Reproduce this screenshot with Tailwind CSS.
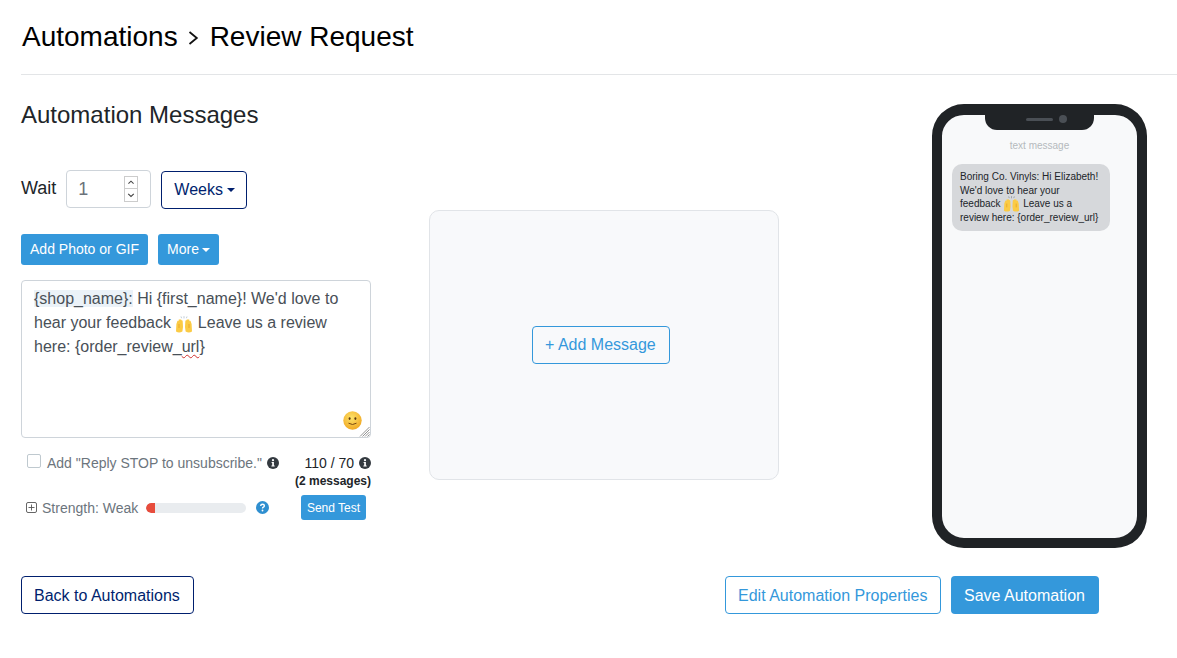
<!DOCTYPE html>
<html>
<head>
<meta charset="utf-8">
<script src="https://cdn.jsdelivr.net/npm/@tailwindcss/browser@4"></script>
</head>
<body class="bg-white font-['Liberation_Sans',Arial,sans-serif] text-[#212529] overflow-hidden">
<div class="w-[1177px] h-[658px] pl-[21px] flex flex-col">
  <header class="h-[75px] border-b border-[#e3e5e7] flex items-start pt-[20px]">
    <h1 class="flex items-center text-[28px] leading-[34px] text-black pl-px">
      <span>Automations</span>
      <svg class="w-[11px] h-[16px] ml-[10px] mr-[11px] mt-[2px]" viewBox="0 0 11 16" fill="none" stroke="#111" stroke-width="1.8"><path d="M1.5 2 L8.8 8 L1.5 14"/></svg>
      <span>Review Request</span>
    </h1>
  </header>
  <main class="flex h-[485px]">
    <section class="w-[350px] shrink-0">
      <h2 class="text-[24px] leading-[29px] mt-[25px] text-[#212529]">Automation Messages</h2>
      <div class="flex items-start mt-[41px] h-[38px]">
        <span class="text-[18px] leading-[36px] mr-[10px]">Wait</span>
        <div class="w-[85px] h-[38px] rounded border border-[#ced4da] flex items-center justify-between pl-[11px] pr-[12px] text-[18px] text-[#6b727a]">
          <span>1</span>
          <div class="w-[14px] h-[26px] border border-[#ccc] flex flex-col text-[#444]">
            <svg class="h-[12px] w-full border-b border-[#ccc]" viewBox="0 0 12 12" fill="none" stroke="#444" stroke-width="1.1"><path d="M3.2 7.2 L6 4.5 L8.8 7.2"/></svg>
            <svg class="h-[12px] w-full" viewBox="0 0 12 12" fill="none" stroke="#444" stroke-width="1.1"><path d="M3.2 4.8 L6 7.5 L8.8 4.8"/></svg>
          </div>
        </div>
        <button class="ml-[10px] mt-px pl-[12px] w-[86px] h-[38px] rounded border border-[#001f6e] text-[#001f6e] text-[16px] flex items-center justify-start">Weeks<span class="ml-[4px] w-0 h-0 border-x-[4px] border-x-transparent border-t-[4.5px] border-t-[#001f6e]"></span></button>
      </div>
      <div class="flex mt-[26px] gap-[10px]">
        <button class="w-[127px] h-[31px] rounded-[3px] bg-[#3498db] text-white text-[14px]">Add Photo or GIF</button>
        <button class="w-[61px] h-[31px] rounded-[3px] bg-[#3498db] text-white text-[14px] flex items-center justify-center">More<span class="ml-[3px] w-0 h-0 border-x-[4px] border-x-transparent border-t-[4.5px] border-t-white"></span></button>
      </div>
      <div class="relative mt-[15px] h-[158px] rounded border border-[#ced4da] pl-[12px] pr-[12px] pt-[6px] text-[16px] leading-[24px] text-[#495057]">
        <div><span class="bg-[#ebf2f8]">{shop_name}:</span> Hi {first_name}! We'd love to<br>hear your feedback <svg class="inline-block w-[18px] h-[18px] my-[-4px] align-[-2px]" viewBox="0 0 18 18"><path d="M1 15.5 L1.4 8 L2.4 5 Q3 4.3 3.4 5.2 L3.8 3.6 Q4.4 3 4.9 3.8 L5.5 3.4 Q6.3 3.2 6.4 4.2 L7 4.2 Q7.8 4.4 7.7 5.5 L8 11 L7.4 15.5 Q4 17.5 1 15.5 Z" fill="#fbcb45"/><path d="M17 15.5 L16.6 8 L15.6 5 Q15 4.3 14.6 5.2 L14.2 3.6 Q13.6 3 13.1 3.8 L12.5 3.4 Q11.7 3.2 11.6 4.2 L11 4.2 Q10.2 4.4 10.3 5.5 L10 11 L10.6 15.5 Q14 17.5 17 15.5 Z" fill="#fbcb45"/><path d="M4 8 V12 M14 8 V12" stroke="#eaa92c" stroke-width="1"/><path d="M6 .5 L6.6 2.2 M9 .2 V2.4 M12 .5 L11.4 2.2" stroke="#b9c6d2" stroke-width=".9"/></svg> Leave us a review<br>here: {order_review_<span class="underline decoration-wavy decoration-[#d0312d] decoration-1 underline-offset-2">url</span>}</div>
        <svg class="absolute right-[8px] bottom-[7px] w-[19px] h-[19px]" viewBox="0 0 19 19">
          <defs><radialGradient id="sm" cx="45%" cy="35%" r="70%"><stop offset="0" stop-color="#fde36a"/><stop offset="1" stop-color="#f0a41e"/></radialGradient></defs>
          <circle cx="9.5" cy="9.5" r="9.2" fill="url(#sm)"/>
          <ellipse cx="6.6" cy="7.6" rx="1" ry="1.4" fill="#5d3a12"/>
          <ellipse cx="12.4" cy="7.6" rx="1" ry="1.4" fill="#5d3a12"/>
          <path d="M5.5 12.2 Q9.5 14.8 13.5 12.2" fill="none" stroke="#7a4a12" stroke-width="1"/>
        </svg>
        <svg class="absolute right-0 bottom-0 w-[11px] h-[11px]" viewBox="0 0 11 11" stroke="#777" stroke-width=".8"><path d="M1 10.5 L10.5 1 M3.5 10.5 L10.5 3.5 M6 10.5 L10.5 6 M8.5 10.5 L10.5 8.5"/></svg>
      </div>
      <div class="flex justify-between mt-[15px]">
        <div class="flex items-start pl-[6px]">
          <span class="w-[14px] h-[14px] rounded-[2px] border border-[#bfc9cf] mt-px"></span>
          <span class="ml-[6px] text-[14px] leading-[20px] text-[#6c757d]">Add "Reply STOP to unsubscribe."</span>
          <svg class="w-[12px] h-[12px] ml-[5px] mt-[4px]" viewBox="0 0 12 12"><circle cx="6" cy="6" r="6" fill="#343a40"/><circle cx="6" cy="3.2" r="1.1" fill="#fff"/><path d="M4.6 5 H6.9 V8.6 H7.7 V9.6 H4.4 V8.6 H5.2 V6 H4.6Z" fill="#fff"/></svg>
        </div>
        <div class="text-right">
          <div class="flex items-center justify-end text-[14px] leading-[20px] text-[#212529]">110 / 70<svg class="w-[12px] h-[12px] ml-[5px]" viewBox="0 0 12 12"><circle cx="6" cy="6" r="6" fill="#343a40"/><circle cx="6" cy="3.2" r="1.1" fill="#fff"/><path d="M4.6 5 H6.9 V8.6 H7.7 V9.6 H4.4 V8.6 H5.2 V6 H4.6Z" fill="#fff"/></svg></div>
          <div class="text-[12px] leading-[16px] font-bold">(2 messages)</div>
        </div>
      </div>
      <div class="flex items-center mt-[6px] pl-[5px]">
        <svg class="w-[11px] h-[11px] shrink-0" viewBox="0 0 11 11" fill="none" stroke="#555" stroke-width=".9"><rect x=".5" y=".5" width="10" height="10" rx="1.5"/><path d="M5.5 2.5 V8.5 M2.5 5.5 H8.5"/></svg>
        <span class="ml-[5px] pt-px text-[14px] text-[#6c757d] w-[104px]">Strength: Weak</span>
        <div class="w-[100px] h-[10px] mt-px rounded-full bg-[#e9ecef] overflow-hidden"><div class="w-[9px] h-full bg-[#e74c3c] rounded-l-full"></div></div>
        <svg class="w-[13px] h-[13px] ml-[10px]" viewBox="0 0 12 12"><circle cx="6" cy="6" r="6" fill="#2f8fd0"/><path d="M4.3 4.6 Q4.4 3 6 3 Q7.7 3 7.7 4.4 Q7.7 5.2 6.8 5.7 Q6 6.1 6 7" fill="none" stroke="#fff" stroke-width="1.3"/><circle cx="6" cy="8.8" r=".85" fill="#fff"/></svg>
        <button class="ml-[32px] w-[65px] h-[25px] rounded-[3px] bg-[#3498db] text-white text-[12px]">Send Test</button>
      </div>
    </section>
    <section class="ml-[58px] w-[350px] h-[270px] mt-[135px] shrink-0 rounded-[10px] border border-[#e1e4e8] bg-[#f8f9fb] flex items-center justify-center">
      <button class="w-[138px] pl-[12px] text-left h-[38px] rounded border border-[#3498db] text-[#3498db] text-[16px] mr-[6px] mt-[-1px]">+ Add Message</button>
    </section>
    <section class="ml-[153px] mt-[29px] w-[215px] h-[444px] shrink-0 rounded-[32px] border-[10px] border-t-[11px] border-[#202326] bg-[#f8f9fa] relative">
      <div class="absolute left-[43px] top-[-2px] w-[109px] h-[17px] pb-[5px] pl-[13px] bg-[#202326] rounded-b-[12px] flex items-center justify-center gap-[6px]">
        <span class="w-[27px] h-[3px] rounded-full bg-[#4a4f55]"></span>
        <span class="w-[8px] h-[8px] rounded-full bg-[#4a4f55]"></span>
      </div>
      <div class="text-center text-[10px] leading-[12px] text-[#b5b9bd] pt-[25px]">text message</div>
      <div class="ml-[10px] mt-[12px] w-[158px] h-[67px] rounded-[10px] bg-[#d6d8db] px-[8px] py-[6px] text-[10px] leading-[13.5px] text-[#212529] whitespace-nowrap">Boring Co. Vinyls: Hi Elizabeth!<br>We'd love to hear your<br>feedback <svg class="inline-block w-[17px] h-[17px] my-[-4px] align-[-2px]" viewBox="0 0 18 18"><path d="M1 15.5 L1.4 8 L2.4 5 Q3 4.3 3.4 5.2 L3.8 3.6 Q4.4 3 4.9 3.8 L5.5 3.4 Q6.3 3.2 6.4 4.2 L7 4.2 Q7.8 4.4 7.7 5.5 L8 11 L7.4 15.5 Q4 17.5 1 15.5 Z" fill="#fbcb45"/><path d="M17 15.5 L16.6 8 L15.6 5 Q15 4.3 14.6 5.2 L14.2 3.6 Q13.6 3 13.1 3.8 L12.5 3.4 Q11.7 3.2 11.6 4.2 L11 4.2 Q10.2 4.4 10.3 5.5 L10 11 L10.6 15.5 Q14 17.5 17 15.5 Z" fill="#fbcb45"/><path d="M4 8 V12 M14 8 V12" stroke="#eaa92c" stroke-width="1"/><path d="M6 .5 L6.6 2.2 M9 .2 V2.4 M12 .5 L11.4 2.2" stroke="#8f98a3" stroke-width=".9"/></svg> Leave us a<br>review here: {order_review_url}</div>
    </section>
  </main>
  <footer class="flex items-center mt-[16px] h-[38px]">
    <button class="w-[173px] pl-[12px] text-left h-[38px] pt-px rounded border border-[#001f6e] text-[#001f6e] text-[16px]">Back to Automations</button>
    <button class="ml-[531px] w-[216px] pl-[12px] text-left h-[38px] pt-px rounded border border-[#3498db] text-[#3498db] text-[16px]">Edit Automation Properties</button>
    <button class="ml-[10px] w-[148px] pl-[13px] text-left h-[38px] pt-px rounded bg-[#3498db] text-white text-[16px]">Save Automation</button>
  </footer>
</div>
</body>
</html>
